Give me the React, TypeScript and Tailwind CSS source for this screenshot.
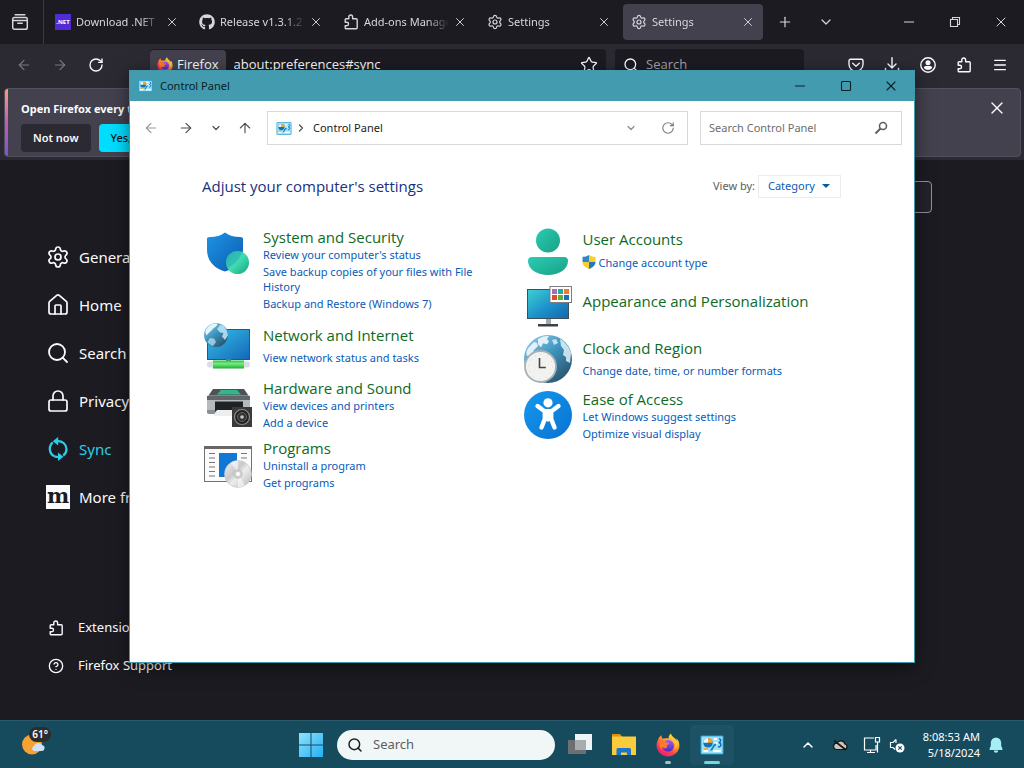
import React from "react";
import {
  ArrowLeft,
  ArrowRight,
  ArrowUp,
  ChevronDown,
  ChevronRight,
  ChevronUp,
  CircleQuestionMark,
  House,
  Lock,
  Menu,
  Minus,
  Plus,
  RotateCw,
  Search,
  Settings,
  Square,
  Star,
  X,
} from "lucide-react";
import { FaGithub } from "react-icons/fa";

type IconProps = { className?: string };

/* ---------- Browser icons ---------- */

function Puzzle({ className }: IconProps) {
  return (
    <svg viewBox="0 0 16 16" className={className} fill="none" stroke="currentColor" strokeWidth="1.4" strokeLinejoin="round" aria-hidden="true">
      <path d="M5.800 4.800V2.900a1.900 1.900 0 0 1 3.800 0v1.900h3.600a1 1 0 0 1 1 1v8a1 1 0 0 1-1 1H3.200a1 1 0 0 1-1-1v-2h1.600a1.700 1.700 0 0 0 0-3.500H2.200V5.800a1 1 0 0 1 1-1z" />
    </svg>
  );
}

function FirefoxLogo({ className }: IconProps) {
  return (
    <svg viewBox="0 0 24 24" className={className} aria-hidden="true">
      <defs>
        <linearGradient id="fxBody" x1="0.85" y1="0.05" x2="0.25" y2="1">
          <stop offset="0" stopColor="#fff04a" />
          <stop offset="0.35" stopColor="#ffa22b" />
          <stop offset="0.65" stopColor="#ff4a45" />
          <stop offset="1" stopColor="#e3167b" />
        </linearGradient>
        <linearGradient id="fxGlobe" x1="0.5" y1="0" x2="0.5" y2="1">
          <stop offset="0" stopColor="#a259ff" />
          <stop offset="1" stopColor="#4b2bb8" />
        </linearGradient>
      </defs>
      <path d="M15 0.5c-2 1.6-2.6 3.6-2.4 5C9.600 5 7.500 5.400 6.700 5.700 5.700 4.700 5.400 3.300 5.600 2.200 3.600 3.200 2.500 5 1.900 6.900.9 8.700.5 10.800.6 12.800 1 19 6 23.500 12 23.500S23.400 18.700 23.400 12.600c0-3.600-1.500-6-3.200-7.300.4 1 .6 1.900.6 2.700C19.300 4.300 15.600 4 15 .5z" fill="url(#fxBody)" />
      <circle cx="12.200" cy="12.800" r="5.800" fill="url(#fxGlobe)" />
      <path d="M3 8.500C6 6.500 9.500 7.800 10.600 9.600c1.300 0 2.700.1 2.700.8-.2.900-1.900 1.200-2.400 2.100-.3.700-.2 1.500.3 2-1.500 1.200-4 .8-5.200-1C5.500 15.500 6 17 7 18 4.500 16 3 12.500 3 8.500z" fill="#ff7a2e" />
      <path d="M16 6.200c3.200 2.200 4.400 6.800 2 10.400 2.200-1.200 3.400-3.600 3.200-6.400-.9-2-2.800-3.600-5.200-4z" fill="#ffc936" />
    </svg>
  );
}

function RecentBox({ className }: IconProps) {
  return (
    <svg viewBox="0 0 18 18" className={className} fill="none" stroke="currentColor" strokeWidth="1.500" strokeLinecap="round" aria-hidden="true">
      <path d="M4.200 1.700h9.600" />
      <path d="M1.700 6.200c0-.9.600-1.700 1.500-1.700h11.600c.9 0 1.500.8 1.500 1.700v8.200a1.800 1.800 0 0 1-1.800 1.800h-11a1.800 1.800 0 0 1-1.800-1.800zM1.700 7.400h14.600M6.800 10.200h4.400" />
    </svg>
  );
}

function Pocket({ className }: IconProps) {
  return (
    <svg viewBox="0 0 16 16" className={className} fill="none" stroke="currentColor" strokeWidth="1.400" strokeLinecap="round" strokeLinejoin="round" aria-hidden="true">
      <path d="M2.500 2.200h11a1.500 1.500 0 0 1 1.500 1.500v3.600a7 7 0 0 1-14 0V3.700a1.500 1.500 0 0 1 1.500-1.500zM4.700 6.200 8 9.300l3.300-3.100" />
    </svg>
  );
}

function DownloadTray({ className }: IconProps) {
  return (
    <svg viewBox="0 0 16 16" className={className} fill="none" stroke="currentColor" strokeWidth="1.400" strokeLinecap="round" strokeLinejoin="round" aria-hidden="true">
      <path d="M8 .8v10M4 7l4 4 4-4M1.500 11.500v1.800c0 1 .7 1.700 1.700 1.700h9.600c1 0 1.700-.7 1.700-1.700v-1.800" />
    </svg>
  );
}

function Account({ className }: IconProps) {
  return (
    <svg viewBox="0 0 16 16" className={className} aria-hidden="true">
      <circle cx="8" cy="8" r="7.200" fill="none" stroke="currentColor" strokeWidth="1.400" />
      <circle cx="8" cy="5.800" r="2.500" fill="currentColor" />
      <path d="M3.800 11c0-1.300 1-2 2-2h4.400c1 0 2 .7 2 2a5.600 5.600 0 0 1-8.400 0z" fill="currentColor" />
    </svg>
  );
}

function SyncArrows({ className }: IconProps) {
  return (
    <svg viewBox="0 0 24 24" className={className} fill="none" stroke="currentColor" strokeWidth="2.200" aria-hidden="true">
      <path d="M8.800 19.500A8.400 8.400 0 0 1 6.800 5.400M11 4.200c5.500-.4 9.500 3.300 9.500 7.800a8.200 8.200 0 0 1-3.300 6.600" />
      <path d="M8.800 19.500c1.400.5 2.600.6 4.200.3" />
      <path d="M12.200 0v8.400L6.800 4.200zM12 15.600V24l5.400-4.200z" fill="currentColor" stroke="none" />
    </svg>
  );
}

/* ---------- Windows icons ---------- */

function Magnifier({ className }: IconProps) {
  return (
    <svg viewBox="0 0 14 14" className={className} fill="none" stroke="currentColor" strokeWidth="1.600" aria-hidden="true">
      <circle cx="9" cy="5" r="3.500" />
      <path d="M6.500 7.500 1.500 12.500" strokeWidth="2" />
    </svg>
  );
}

function ControlPanelIcon({ className }: IconProps) {
  return (
    <svg viewBox="0 0 24 20" className={className} aria-hidden="true">
      <rect x="0.500" y="0.500" width="23" height="19" rx="1" fill="#2b9fd6" />
      <rect x="1.500" y="1.500" width="21" height="17" fill="#9be3fa" />
      <circle cx="8" cy="7.800" r="4.800" fill="#1573b9" />
      <path d="M8 7.800V3a4.800 4.800 0 0 1 4.800 4.800z" fill="#f5a623" />
      <path d="M8 7.800V3a4.800 4.800 0 0 0-4.800 4.800z" fill="#e9f8ff" />
      <path d="M14 4h3M14.500 8h3M3.500 16h4.500M13 16h8" stroke="#fff" strokeWidth="1.800" />
      <path d="M10.500 15c3 0 2-5.500 5.500-5.500" stroke="#1b7fc4" strokeWidth="1.800" fill="none" />
      <path d="M19 3.500c3 .5 1.500 4-.5 4 3 0 3.500 4.500-.5 4.500" stroke="#156ead" strokeWidth="1.500" fill="none" />
      <path d="M4 14h4" stroke="#f5a623" strokeWidth="1.600" />
    </svg>
  );
}

function SecurityIcon() {
  return (
    <svg viewBox="0 0 48 48" className="size-12 shrink-0" aria-hidden="true">
      <defs>
        <linearGradient id="shieldG" x1="0" y1="0" x2="1" y2="1">
          <stop offset="0" stopColor="#1e94e4" />
          <stop offset="1" stopColor="#0a5cb0" />
        </linearGradient>
        <linearGradient id="badgeG" x1="0" y1="0" x2="1" y2="1">
          <stop offset="0" stopColor="#2fc3a8" />
          <stop offset="0.500" stopColor="#3fdcae" />
          <stop offset="1" stopColor="#149f87" />
        </linearGradient>
      </defs>
      <g transform="translate(0 2)">
        <path d="M21 3.500c4 3.200 9 4.500 15 4.500 2.300 0 3 .8 3 2v10.500c0 11-6.500 18.500-18 22C9.500 39 3 31.500 3 20.500V10c0-1.200.7-2 3-2 6 0 11-1.300 15-4.500z" fill="url(#shieldG)" />
        <circle cx="33.500" cy="33.500" r="11.500" fill="url(#badgeG)" />
        <path d="M39 20.600V23.300A11.500 11.500 0 0 0 23.300 39 28 28 0 0 0 39 20.600z" fill="#1a8fc0" opacity="0.300" />
      </g>
    </svg>
  );
}

function GlobeShape({ cx, cy, r }: { cx: number; cy: number; r: number }) {
  return (
    <g transform={`translate(${cx} ${cy}) scale(${r / 12})`}>
      <circle r="12" fill="url(#globeG)" />
      <path d="M-9-7C-6-11-2-12 1-11.500c1 2-1 2.500-2 4-2 0-2 2-3.500 3C-6-3-8-2-9.500.5-11-2-11-5-9-7z" fill="#e4f5fc" />
      <path d="M1-6l3-4 3.500.5L10-6c1 2 1.800 4 1.900 6.500L9 5 6 1.500 7.500-2 4-2.500z" fill="#b7e1f3" opacity="0.900" />
      <path d="M-6 3l4 .5L0 7-3 11c-2-.5-4-2-5.500-4z" fill="#b7e1f3" opacity="0.750" />
    </g>
  );
}

function GlobeGradient() {
  return (
    <linearGradient id="globeG" x1="0.100" y1="0" x2="0.900" y2="1">
      <stop offset="0" stopColor="#8fcdea" />
      <stop offset="0.450" stopColor="#3d94c0" />
      <stop offset="1" stopColor="#27495f" />
    </linearGradient>
  );
}

function NetworkIcon() {
  return (
    <svg viewBox="0 0 48 48" className="size-12 shrink-0" aria-hidden="true">
      <defs>
        <GlobeGradient />
        <linearGradient id="netG" x1="0" y1="0" x2="1" y2="1">
          <stop offset="0" stopColor="#35c1e6" />
          <stop offset="1" stopColor="#1466b8" />
        </linearGradient>
        <linearGradient id="pipeG" x1="0" y1="0" x2="0" y2="1">
          <stop offset="0" stopColor="#2fbf4a" />
          <stop offset="0.400" stopColor="#71f07a" />
          <stop offset="1" stopColor="#22a83d" />
        </linearGradient>
      </defs>
      <rect x="3.500" y="7.500" width="42" height="30" fill="url(#netG)" stroke="#2f566b" />
      <rect x="22" y="37" width="5" height="3" fill="#5e7f70" />
      <rect x="3" y="39.500" width="43" height="6" rx="2.500" fill="#d9dfe0" />
      <rect x="9" y="38.500" width="31" height="8" fill="url(#pipeG)" />
      <GlobeShape cx={12} cy={13} r={12} />
    </svg>
  );
}

function HardwareIcon() {
  return (
    <svg viewBox="0 0 48 48" className="size-12 shrink-0" aria-hidden="true">
      <path d="M9 9h31l5.500 8h-42z" fill="#4f5254" />
      <path d="M17 10h16l4 4.500H13z" fill="#35b58c" />
      <rect x="3" y="15.500" width="43" height="18" rx="1" fill="#b7babd" />
      <path d="M3 16h43v4H3z" fill="#62666a" />
      <path d="M3 30h43v4H5a2 2 0 0 1-2-2z" fill="#8b8f93" />
      <rect x="11" y="21.500" width="28" height="10" fill="#202326" />
      <path d="M13 30h22l3 6H9z" fill="#eceef0" />
      <rect x="28" y="27" width="20" height="20" fill="#3b3b3c" />
      <circle cx="38" cy="37" r="7.500" fill="#222" stroke="#8c8c8c" strokeWidth="1.200" />
      <circle cx="38" cy="37" r="4.500" fill="#333" stroke="#666" />
      <circle cx="38" cy="37" r="1.800" fill="#c9c9c9" />
    </svg>
  );
}

function ProgramsIcon() {
  return (
    <svg viewBox="0 0 48 48" className="size-12 shrink-0" aria-hidden="true">
      <defs>
        <linearGradient id="discG" x1="0" y1="0" x2="1" y2="1">
          <stop offset="0" stopColor="#f4f4f4" />
          <stop offset="0.400" stopColor="#c9c9c9" />
          <stop offset="0.550" stopColor="#ededed" />
          <stop offset="1" stopColor="#b5b5b5" />
        </linearGradient>
      </defs>
      <g transform="translate(0 1)">
        <rect x="0.500" y="5.500" width="47" height="35" fill="#fbfbfb" stroke="#74706f" />
        <path d="M0 5h48v3H0z" fill="#6a6665" />
        <path d="M5 12.500h6M5 17h6M5 21.500h6M5 26h6M5 30.500h6M5 35h6M37 12.500h6M37 17h6" stroke="#777" strokeWidth="1.200" />
        <rect x="15" y="12" width="18" height="24" fill="#0f78d4" />
        <circle cx="34" cy="33" r="13.500" fill="url(#discG)" stroke="#c4c4c4" strokeWidth="0.600" />
        <path d="M34 33 27 21.500a14 14 0 0 1 7-2zM34 33l7 11.500a14 14 0 0 1-7 2z" fill="#fff" opacity="0.550" />
        <circle cx="34" cy="33" r="4.300" fill="#cfcfcf" stroke="#b7b7b7" strokeWidth="0.700" />
        <circle cx="34" cy="33" r="2" fill="#fff" />
      </g>
    </svg>
  );
}

function UserIcon() {
  return (
    <svg viewBox="0 0 48 48" className="size-12 shrink-0" aria-hidden="true">
      <defs>
        <linearGradient id="userG" x1="0" y1="0" x2="1" y2="1">
          <stop offset="0" stopColor="#28cdb5" />
          <stop offset="1" stopColor="#1ba085" />
        </linearGradient>
      </defs>
      <circle cx="24" cy="13.500" r="12" fill="url(#userG)" />
      <path d="M8 30h32a4 4 0 0 1 4 4c0 8.500-9.500 14-20 14S4 42.500 4 34a4 4 0 0 1 4-4z" fill="url(#userG)" />
    </svg>
  );
}

function AppearanceIcon() {
  return (
    <svg viewBox="0 0 48 48" className="size-12 shrink-0" aria-hidden="true">
      <defs>
        <linearGradient id="dispG" x1="0" y1="0" x2="1" y2="1">
          <stop offset="0" stopColor="#3fd0d2" />
          <stop offset="0.550" stopColor="#1c90c9" />
          <stop offset="1" stopColor="#1565ae" />
        </linearGradient>
      </defs>
      <g transform="translate(0 1)">
        <rect x="22" y="37" width="5" height="6" fill="#a3a9ad" />
        <rect x="14" y="42" width="20" height="2.500" fill="#3b4146" />
        <rect x="3.500" y="7.500" width="41" height="29" fill="url(#dispG)" stroke="#39515d" />
        <rect x="26" y="4.500" width="21.500" height="16" fill="#fff" stroke="#7e7c80" />
        <rect x="28" y="7" width="5" height="5" fill="#a76cb4" />
        <rect x="34" y="7" width="5" height="5" fill="#25a9a0" />
        <rect x="40" y="7" width="5" height="5" fill="#ef7c2a" />
        <rect x="28" y="13" width="5" height="5" fill="#dd4c2e" />
        <rect x="34" y="13" width="5" height="5" fill="#63ad36" />
        <rect x="40" y="13" width="5" height="5" fill="#1a6fc0" />
      </g>
    </svg>
  );
}

function ClockIcon() {
  return (
    <svg viewBox="0 0 48 48" className="size-12 shrink-0" aria-hidden="true">
      <defs>
        <GlobeGradient />
      </defs>
      <circle cx="24" cy="24" r="24" fill="url(#globeG)" />
      <path d="M5 12l5-5 3 1 1 3-4 4-2 5-5 1C1.500 17 3 15 5 12zM14 4l5-2.500 6-.8-2 3.500 2 2-2 3-4-1-2 4-3-3z" fill="#e2f1f8" />
      <path d="M36 4c5 3 9.500 8 11 14l-1 10-4-2 0-4-3-2 1-5-3-4z" fill="#e2f1f8" opacity="0.850" />
      <path d="M28 5l4-1 2 4-4 2z" fill="#c3e2f0" />
      <circle cx="16.500" cy="31.500" r="15.500" fill="#f2f2f1" stroke="#a9b0b3" strokeWidth="1.800" />
      <circle cx="16.500" cy="31.500" r="12" fill="none" stroke="#d5d7d8" strokeDasharray="1 5.280" />
      <path d="M15.500 23v10M14.800 32.500h7" stroke="#4a4444" strokeWidth="1.600" fill="none" />
    </svg>
  );
}

function AccessIcon() {
  return (
    <svg viewBox="0 0 48 48" className="size-12 shrink-0" aria-hidden="true">
      <defs>
        <linearGradient id="easeG" x1="0" y1="0" x2="1" y2="1">
          <stop offset="0" stopColor="#1598ee" />
          <stop offset="1" stopColor="#0873d0" />
        </linearGradient>
      </defs>
      <circle cx="24" cy="24" r="24" fill="url(#easeG)" />
      <circle cx="24" cy="11.800" r="4.600" fill="#fff" />
      <path d="M13.500 15 20.500 20.200h7L34.500 15M20.800 22v6L17.500 36.500M27.200 22v6L30.500 36.500" fill="none" stroke="#fff" strokeWidth="4.400" strokeLinecap="round" strokeLinejoin="round" />
      <path d="M19.500 18.500h9v10.200l-4.500 2-4.500-2z" fill="#fff" />
    </svg>
  );
}

function UacShield() {
  return (
    <svg viewBox="0 0 16 16" className="size-4 shrink-0" aria-hidden="true">
      <path d="M8 1c2 1.300 4 1.800 6.500 1.800V8H8z" fill="#f8cf2c" />
      <path d="M8 1C6 2.300 4 2.800 1.500 2.800V8H8z" fill="#2f86cf" />
      <path d="M1.500 8H8v7C4.500 13.500 1.500 11.500 1.500 8z" fill="#f8cf2c" />
      <path d="M14.500 8H8v7c3.500-1.500 6.500-3.500 6.500-7z" fill="#2476bf" />
    </svg>
  );
}

/* ---------- Browser ---------- */

const TABS = [
  { title: "Download .NET", icon: "net" },
  { title: "Release v1.3.1.2", icon: "github" },
  { title: "Add-ons Manager", icon: "puzzle" },
  { title: "Settings", icon: "gear" },
  { title: "Settings", icon: "gear", active: true },
];

function TabIcon({ kind }: { kind: string }) {
  if (kind === "net")
    return (
      <span className="flex size-4 shrink-0 items-center justify-center bg-[#512bd4] text-[6px] font-bold text-white">.NET</span>
    );
  if (kind === "github") return <FaGithub className="size-4 shrink-0" />;
  if (kind === "puzzle") return <Puzzle className="size-4 shrink-0" />;
  return <Settings className="size-4 shrink-0" strokeWidth={1.8} />;
}

function TabStrip() {
  return (
    <div className="flex h-11 items-center bg-[#1c1b22] text-[#d6d6dc]">
      <button className="flex h-11 w-11 shrink-0 items-center border-r border-[#3a3944] pl-[11px]" aria-label="Recent browsing">
        <RecentBox className="size-[18px]" />
      </button>
      <ul className="ml-px flex">
        {TABS.map((tab, i) => (
          <li key={i} className="w-36 px-[2px]">
            <div className={`flex h-9 items-center rounded px-2 ${tab.active ? "bg-[#42414d]" : ""}`}>
              <TabIcon kind={tab.icon} />
              <span className="ml-[5px] min-w-0 flex-1 overflow-hidden text-[11px] whitespace-nowrap [mask-image:linear-gradient(to_right,black_75%,transparent)]">{tab.title}</span>
              <button className="ml-1" aria-label={`Close ${tab.title}`}>
                <X className="size-[14px]" strokeWidth={1.6} />
              </button>
            </div>
          </li>
        ))}
      </ul>
      <button className="ml-2 p-1" aria-label="New tab">
        <Plus className="size-4" strokeWidth={1.8} />
      </button>
      <button className="ml-[17px] p-1" aria-label="List all tabs">
        <ChevronDown className="size-4" strokeWidth={1.8} />
      </button>
      <div className="ml-auto flex items-center">
        <button className="flex w-[46px] justify-center" aria-label="Minimize browser">
          <Minus className="size-4" strokeWidth={1.5} />
        </button>
        <button className="flex w-[46px] justify-center" aria-label="Restore browser">
          <svg viewBox="0 0 12 12" className="size-3" fill="none" stroke="currentColor" strokeWidth="1.100" aria-hidden="true">
            <path d="M1.500 3.500h7v7h-7zM3.500 3.500v-2h7v7h-2" />
          </svg>
        </button>
        <button className="flex w-[46px] justify-center" aria-label="Close browser">
          <X className="size-4" strokeWidth={1.5} />
        </button>
      </div>
    </div>
  );
}

function NavBar() {
  return (
    <div className="flex h-11 items-center bg-[#2b2a33] px-4 pb-[2px] font-['Open_Sans',sans-serif] text-[#fbfbfe]">
      <div className="flex gap-5">
        <button className="text-[#77767e]" aria-label="Back">
          <ArrowLeft className="size-4" strokeWidth={1.8} />
        </button>
        <button className="text-[#77767e]" aria-label="Forward">
          <ArrowRight className="size-4" strokeWidth={1.8} />
        </button>
        <button aria-label="Reload">
          <RotateCw className="size-4" strokeWidth={2} />
        </button>
      </div>
      <div className="ml-[46px] flex h-8 min-w-0 flex-[448] items-center rounded bg-[#1c1b22] pr-2">
        <span className="flex h-[30px] items-center gap-1 rounded bg-[#42414d] px-[7px] text-[13px]">
          <FirefoxLogo className="size-4" />
          Firefox
        </span>
        <input aria-label="Address" defaultValue="about:preferences#sync" className="ml-2 min-w-0 flex-1 bg-transparent text-[13px] outline-none" />
        <button aria-label="Bookmark this page">
          <Star className="size-[18px]" strokeWidth={1.7} />
        </button>
      </div>
      <label className="ml-[9px] flex h-8 min-w-0 flex-[173] items-center gap-[7px] rounded bg-[#1c1b22] px-2">
        <Search className="size-4" strokeWidth={2} />
        <input aria-label="Web search" placeholder="Search" className="min-w-0 flex-1 bg-transparent text-[13px] outline-none placeholder:text-[#a5a4ab]" />
      </label>
      <div className="ml-11 flex gap-5">
        <button aria-label="Save to Pocket"><Pocket className="size-4" /></button>
        <button aria-label="Downloads"><DownloadTray className="size-4" /></button>
        <button aria-label="Account"><Account className="size-4" /></button>
        <button aria-label="Extensions"><Puzzle className="size-4" /></button>
        <button aria-label="Application menu"><Menu className="size-4" strokeWidth={2} /></button>
      </div>
    </div>
  );
}

function Notification() {
  return (
    <div className="h-[72px] bg-[#2b2a33] pr-[3px] pl-1">
      <div className="flex h-[69px] overflow-hidden rounded border border-[#52515e] bg-[#42414d] text-[#fbfbfe]">
        <div className="w-[3px] bg-linear-to-b from-[#ff9a6b] via-[#c45bb4] to-[#7d4fd6]" />
        <div className="flex-1 pt-[10px] pl-[13px]">
          <p className="text-[11px] leading-5 font-bold whitespace-nowrap">Open Firefox every time you restart your computer?</p>
          <div className="mt-[5px] flex gap-2 text-[11px] font-semibold">
            <button className="h-7 rounded bg-[#2b2a33] px-3">Not now</button>
            <button className="h-7 rounded bg-[#00ddff] px-3 font-medium text-[#15141a]">Yes, open it</button>
          </div>
        </div>
        <button className="mt-[9px] mr-[13px] size-5" aria-label="Dismiss">
          <X className="size-5" strokeWidth={1.6} />
        </button>
      </div>
    </div>
  );
}

function PreferencesPage() {
  const items = [
    { label: "General", icon: <Settings className="size-6" strokeWidth={1.7} /> },
    { label: "Home", icon: <House className="size-6" strokeWidth={1.7} /> },
    { label: "Search", icon: <Search className="size-6" strokeWidth={1.8} /> },
    { label: "Privacy", icon: <Lock className="size-6" strokeWidth={1.7} /> },
    { label: "Sync", icon: <SyncArrows className="size-6" />, active: true },
    {
      label: "More from Mozilla",
      icon: (
        <span className="flex size-6 items-center justify-center bg-[#fbfbfe] pb-1 font-['DejaVu_Serif',serif] text-[21px] leading-none font-bold text-[#1c1b22]">m</span>
      ),
    },
  ];
  return (
    <div className="flex flex-1 bg-[#1c1b22] text-[#fbfbfe]">
      <nav className="flex w-[260px] flex-col justify-between pt-[73px] pb-[35px] pl-[46px]">
        <ul>
          {items.map((item) => (
            <li key={item.label}>
              <a href="#" className={`flex h-12 items-center gap-[9px] text-[15px] ${item.active ? "text-[#29cfe8]" : ""}`}>
                {item.icon}
                {item.label}
              </a>
            </li>
          ))}
        </ul>
        <ul className="text-[13px]">
          <li>
            <a href="#" className="flex h-[38px] items-center gap-[14px] pl-[2px]">
              <Puzzle className="size-4" />
              Extensions
            </a>
          </li>
          <li>
            <a href="#" className="flex h-[38px] items-center gap-[14px] pl-[2px]">
              <CircleQuestionMark className="size-4" strokeWidth={2} />
              Firefox Support
            </a>
          </li>
        </ul>
      </nav>
      <main className="flex flex-1 justify-end pt-[21px] pr-[92px]">
        <input aria-label="Find in Settings" className="h-8 w-[280px] rounded border border-[#8f8f9d] bg-[#23222b]" />
      </main>
    </div>
  );
}

/* ---------- Control Panel ---------- */

type Category = {
  title: string;
  links: string[];
  icon: React.ReactNode;
  shield?: boolean;
};

const LEFT: Category[] = [
  {
    title: "System and Security",
    links: ["Review your computer's status", "Save backup copies of your files with File History", "Backup and Restore (Windows 7)"],
    icon: <SecurityIcon />,
  },
  { title: "Network and Internet", links: ["View network status and tasks"], icon: <NetworkIcon /> },
  { title: "Hardware and Sound", links: ["View devices and printers", "Add a device"], icon: <HardwareIcon /> },
  { title: "Programs", links: ["Uninstall a program", "Get programs"], icon: <ProgramsIcon /> },
];

const RIGHT: Category[] = [
  { title: "User Accounts", links: ["Change account type"], icon: <UserIcon />, shield: true },
  { title: "Appearance and Personalization", links: [], icon: <AppearanceIcon /> },
  { title: "Clock and Region", links: ["Change date, time, or number formats"], icon: <ClockIcon /> },
  { title: "Ease of Access", links: ["Let Windows suggest settings", "Optimize visual display"], icon: <AccessIcon /> },
];

function CategoryItem({ item }: { item: Category }) {
  const single = item.links.length < 2;
  return (
    <li className={`flex gap-[11px] ${item.links.length > 2 ? "mb-[3px] items-start" : "items-center"}`}>
      {item.icon}
      <div className={`max-w-[222px] ${single ? "mb-[3px]" : ""}`}>
        <a href="#" className="block font-['Open_Sans',sans-serif] text-[15px] leading-5 whitespace-nowrap text-[#0d6b1f]">{item.title}</a>
        <ul className={`flex flex-col gap-[2px] text-[11px] leading-[15px] text-[#0a5bb8] ${single ? "mt-[5px]" : ""}`}>
          {item.links.map((link) => (
            <li key={link} className={item.shield ? "-ml-[2px] flex items-center gap-[2px]" : ""}>
              {item.shield && <UacShield />}
              <a href="#">{link}</a>
            </li>
          ))}
        </ul>
      </div>
    </li>
  );
}

function ControlPanel() {
  return (
    <section
      aria-label="Control Panel"
      className="absolute top-[70px] right-[109px] bottom-[105px] left-[129px] border border-[#3f9aab] bg-white text-[11px] text-[#1b1b1b] shadow-[0_4px_16px_rgba(0,0,0,0.5)]"
    >
      <header className="flex h-[30px] items-center bg-[#429bae] pl-2">
        <ControlPanelIcon className="h-3 w-[15px]" />
        <h1 className="ml-[7px] text-[11px] text-[#0c2026]">Control Panel</h1>
        <div className="ml-auto flex text-[#0c2026]">
          <button className="flex w-[46px] justify-center" aria-label="Minimize"><Minus className="size-4" strokeWidth={1.5} /></button>
          <button className="flex w-[45px] items-center justify-center" aria-label="Maximize"><Square className="size-3" strokeWidth={2.2} /></button>
          <button className="flex w-[46px] justify-center" aria-label="Close"><X className="size-4" strokeWidth={1.6} /></button>
        </div>
      </header>

      <div className="flex items-center pt-[10px] pr-3 pl-[13px] text-[#4d4d4d]">
        <button aria-label="Back" className="text-[#9a9a9a]"><ArrowLeft className="size-4" strokeWidth={1.7} /></button>
        <button aria-label="Forward" className="ml-[19px]"><ArrowRight className="size-4" strokeWidth={1.7} /></button>
        <button aria-label="Recent locations" className="ml-4"><ChevronDown className="size-3" strokeWidth={2.4} /></button>
        <button aria-label="Up" className="ml-[15px]"><ArrowUp className="size-4" strokeWidth={1.7} /></button>
        <div className="ml-[14px] flex h-[34px] min-w-0 flex-[399] items-center border border-[#d9d9d9] pr-3 pl-2">
          <ControlPanelIcon className="h-[13px] w-4" />
          <ChevronRight className="mx-[3px] size-3" strokeWidth={2.4} />
          <button className="ml-[3px] flex-1 text-left text-[#1b1b1b]">Control Panel</button>
          <button aria-label="Previous locations"><ChevronDown className="size-3 text-[#8a8a8a]" strokeWidth={2.4} /></button>
          <button aria-label="Refresh" className="ml-6"><RotateCw className="size-[14px] text-[#7a7a7a]" strokeWidth={1.9} /></button>
        </div>
        <label className="ml-3 flex h-[34px] min-w-0 flex-[179] items-center border border-[#d9d9d9] pr-[13px] pl-2">
          <input aria-label="Search Control Panel" placeholder="Search Control Panel" className="min-w-0 flex-1 outline-none placeholder:text-[#6d6d6d]" />
          <Magnifier className="size-[14px] text-[#5f5f5f]" />
        </label>
      </div>

      <div className="pt-[29px] pr-[73px] pl-[72px]">
        <div className="flex items-center justify-between">
          <h2 className="font-['Open_Sans',sans-serif] text-[15px] leading-6 text-[#17307f]">Adjust your computer's settings</h2>
          <div className="flex items-center gap-[3px]">
            <label htmlFor="view-by" className="text-[#5c5c5c]">View by:</label>
            <div className="relative">
              <select id="view-by" className="h-[23px] w-[83px] appearance-none border border-[#ececec] bg-white pl-[9px] text-[#0a5bb8] outline-none" defaultValue="Category">
                <option>Category</option>
                <option>Large icons</option>
                <option>Small icons</option>
              </select>
              <svg viewBox="0 0 8 4" className="pointer-events-none absolute top-[9px] right-[11px] h-1 w-2" aria-hidden="true">
                <path d="M0 0h8L4 4z" fill="#0a5b9c" />
              </svg>
            </div>
          </div>
        </div>
        <div className="mt-[29px] grid grid-cols-2 gap-x-[2px] pl-[2px]">
          <ul className="flex flex-col gap-2">
            {LEFT.map((item) => <CategoryItem key={item.title} item={item} />)}
          </ul>
          <ul className="flex flex-col gap-[6px]">
            {RIGHT.map((item) => <CategoryItem key={item.title} item={item} />)}
          </ul>
        </div>
      </div>
    </section>
  );
}

/* ---------- Taskbar ---------- */

function Taskbar() {
  return (
    <footer className="grid h-12 grid-cols-[1fr_auto_1fr] items-center border-t border-[#2a5a6c] bg-[#164b5e] pl-[9px] text-white">
      <button className="relative ml-[10px] size-8" aria-label="Weather">
        <svg viewBox="0 0 32 32" className="size-8" aria-hidden="true">
          <circle cx="13" cy="15.500" r="10" fill="#f5a233" />
          <path d="M15 22h7a3 3 0 0 0 1-6 4.500 4.500 0 0 0-8 1 2.600 2.600 0 0 0 0 5z" fill="#cfe0f7" />
        </svg>
        <span className="absolute -top-[2px] right-0 rounded-full bg-[#2c2c2c] px-[3px] text-[10px] leading-[15px] font-semibold">61°</span>
      </button>
      <div className="flex items-center">
        <button aria-label="Start">
          <svg viewBox="0 0 24 24" className="size-6" aria-hidden="true">
            <defs>
              <linearGradient id="winG" x1="0" y1="0" x2="1" y2="1">
                <stop offset="0" stopColor="#8fe3ff" />
                <stop offset="1" stopColor="#25aef2" />
              </linearGradient>
            </defs>
            <path d="M0 0h11.500v11.500H0zM12.500 0H24v11.500H12.500zM0 12.500h11.500V24H0zM12.500 12.500H24V24H12.500z" fill="url(#winG)" />
          </svg>
        </button>
        <label className="ml-[14px] flex h-[30px] w-[218px] items-center gap-[10px] rounded-full bg-[#f1f6f7] px-[10px] text-[#1f1f1f]">
          <Search className="size-4 shrink-0" strokeWidth={2.2} />
          <input aria-label="Taskbar search" placeholder="Search" className="min-w-0 flex-1 bg-transparent text-[13px] outline-none placeholder:text-[#5b5f61]" />
        </label>
        <button className="ml-[3px] flex h-10 w-11 items-center justify-center" aria-label="Task view">
          <svg viewBox="0 0 26 24" className="h-6 w-[26px]" aria-hidden="true">
            <rect x="8" y="1" width="17" height="16" fill="#eef3f5" />
            <rect x="1" y="7" width="18" height="14" fill="#6d7073" />
            <rect x="8" y="7" width="11" height="10" fill="#a9acae" />
          </svg>
        </button>
        <button className="flex h-10 w-11 items-center justify-center" aria-label="File Explorer">
          <svg viewBox="0 0 26 24" className="h-6 w-[26px]" aria-hidden="true">
            <path d="M1 1h8l2.500 3H1z" fill="#d8960c" />
            <path d="M1 3.500h24V22H1z" fill="#fccb3c" />
            <path d="M5.500 22v-5.500a1.500 1.500 0 0 1 1.500-1.500h11.500a1.500 1.500 0 0 1 1.500 1.500V22h-4v-2.500H10V22z" fill="#1877cf" />
          </svg>
        </button>
        <button className="relative flex h-10 w-11 items-center justify-center" aria-label="Firefox">
          <FirefoxLogo className="size-6" />
          <span className="absolute bottom-px h-[3px] w-[6px] rounded-full bg-[#a9bfc6]" />
        </button>
        <button className="relative flex h-10 w-11 items-center justify-center rounded bg-[#1d5164]" aria-label="Control Panel">
          <ControlPanelIcon className="h-5 w-6" />
          <span className="absolute bottom-px h-[3px] w-4 rounded-full bg-[#6fd6e2]" />
        </button>
      </div>
      <div className="flex items-center justify-end pr-5">
        <button aria-label="Show hidden icons"><ChevronUp className="size-4" strokeWidth={2.2} /></button>
        <button className="ml-4" aria-label="OneDrive">
          <svg viewBox="0 0 16 16" className="size-4" aria-hidden="true">
            <path d="M4 12.500h8.500a2.800 2.800 0 0 0 .4-5.500A4.300 4.300 0 0 0 5 6.200a3.200 3.200 0 0 0-1 6.300z" fill="#c9c4bd" stroke="#161616" strokeWidth="1.200" />
            <path d="M2 3.500l12 9.500" stroke="#161616" strokeWidth="1.600" />
          </svg>
        </button>
        <button className="ml-[15px]" aria-label="Network">
          <svg viewBox="0 0 18 18" className="size-[18px]" fill="none" stroke="currentColor" strokeWidth="1.200" aria-hidden="true">
            <path d="M11 2H1.500v12H13V9M4 16.500h8M7.500 14v2.500M12.500 1.500h4v4.500h-4zM14.500 6v10.500" />
          </svg>
        </button>
        <button className="ml-2" aria-label="Volume">
          <svg viewBox="0 0 16 16" className="size-4" aria-hidden="true">
            <path d="M7 2.500 4 5.500H1.500v5H4l2 2M7 2.500V6" fill="none" stroke="currentColor" strokeWidth="1.200" />
            <circle cx="11" cy="11" r="4.500" fill="#fff" />
            <path d="m9.300 9.300 3.400 3.400M12.700 9.300l-3.400 3.400" stroke="#164b5e" strokeWidth="1.100" />
          </svg>
        </button>
        <button className="ml-[18px] text-right text-[11px] leading-4">
          8:08:53 AM<br />5/18/2024
        </button>
        <button className="ml-2 text-[#a5eef5]" aria-label="Notifications">
          <svg viewBox="0 0 16 16" className="size-4" fill="currentColor" aria-hidden="true">
            <path d="M8 .5a5.200 5.200 0 0 0-5.200 5.200v3L1.500 12c-.2.500.1.900.6.900h11.800c.5 0 .8-.4.6-.9l-1.300-3.300v-3A5.200 5.200 0 0 0 8 .5zM5.800 13.600a2.200 2.200 0 0 0 4.400 0z" />
          </svg>
        </button>
      </div>
    </footer>
  );
}

export default function App() {
  return (
    <div className="relative flex min-h-screen flex-col bg-[#1c1b22] font-['Noto_Sans','Open_Sans',sans-serif]">
      <TabStrip />
      <NavBar />
      <Notification />
      <PreferencesPage />
      <Taskbar />
      <ControlPanel />
    </div>
  );
}
